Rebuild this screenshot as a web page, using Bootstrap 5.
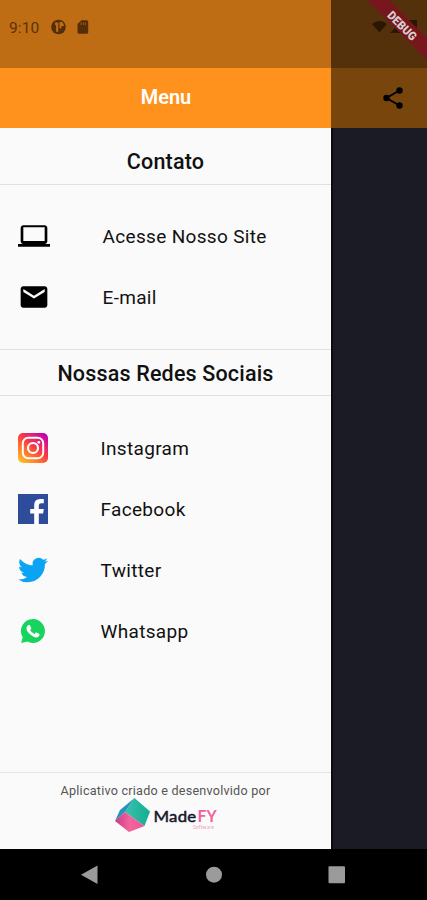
<!DOCTYPE html>
<html lang="pt-BR">
<head>
<meta charset="utf-8">
<meta name="viewport" content="width=device-width, initial-scale=1">
<title>Menu</title>
<link href="https://cdn.jsdelivr.net/npm/bootstrap@5.3.0/dist/css/bootstrap.min.css" rel="stylesheet">
<style>
body{font-family:Roboto,"Liberation Sans",sans-serif;background:#000;color:#111}
svg{display:block;flex-shrink:0}
.phone{width:427px;height:900px}
.drawer{width:331px;background:#fafafa}
.drawer-status{height:68px;background:#bf6d14;padding:0 0 12px 9px;color:#5a3208;font-size:15.5px;letter-spacing:.1px}
.drawer-status span{padding-top:2px}
.drawer-title{height:60px;background:#ff921c;font-size:20px;font-weight:600;padding:0 0 2px 1px}
.section-title{font-size:21.5px;font-weight:500;line-height:1;letter-spacing:.17px;border-bottom:1px solid #e0e0e0}
.title-contact{height:57px;padding-top:11px}
.title-social{height:47px;border-top:1px solid #e0e0e0;padding-top:2px}
.contact{height:164px;padding-top:20px}
.social{padding-top:21px}
.entry{height:61px;padding-left:18px;font-size:19px;letter-spacing:.33px;color:#111;line-height:1}
.entry span{padding-top:2px}
.entry-icon{width:84.5px}
.social .entry-icon{width:82.5px}
.credit{height:77px;border-top:1px solid #e4e4e4;font-size:12.6px;letter-spacing:.23px;line-height:15px;color:#555;padding-top:10px}
.brand{height:36px}
.side{width:96px;background:#1a1b24;border-left:2px solid #0c0c14}
.side-status,.side-bar{margin-left:-2px}
.side-status{height:68px;background:#55310b}
.side-bar{height:60px;background:#78450c;padding-right:22px}
.ribbon{right:0;top:0}
.navkeys{height:51px;background:#000}
</style>
</head>
<body>
<div class="phone d-flex flex-column overflow-hidden">
  <div class="d-flex flex-grow-1">
    <aside class="drawer d-flex flex-column">
      <div class="drawer-status d-flex align-items-center">
        <span>9:10</span>
        <svg class="ms-2" width="47" height="20" viewBox="0 0 47 20">
          <circle cx="11.500" cy="9" r="7.300" fill="#542e06"/>
          <path d="M8 4.500h3.300v9.200H9.100V7H8zM12.500 4h2.500q2 1.500 2 4h-2.500v2.200h-2z" fill="#bf6d14"/>
          <path d="M34.500 2.200h5.200q1.500 0 1.500 1.500v10.600q0 1.500-1.500 1.500H32q-1.500 0-1.500-1.500V6z" fill="#542e06"/>
          <path d="M34 4.500V7M36.200 4.500V7M38.400 4.500V7" stroke="#a05b11" stroke-width="1"/>
        </svg>
      </div>
      <div class="drawer-title d-flex align-items-center justify-content-center text-white">Menu</div>
      <div class="section-title title-contact d-flex align-items-center justify-content-center">Contato</div>
      <nav class="contact">
        <div class="entry d-flex align-items-center">
          <div class="entry-icon"><svg width="32" height="32" viewBox="0 0 24 24"><path d="M20 18c1.100 0 2-.9 2-2V6c0-1.100-.9-2-2-2H4c-1.100 0-2 .9-2 2v10c0 1.100.9 2 2 2H0v2h24v-2h-4zM4 5.500h16V15.800H4z"/></svg></div>
          <span>Acesse Nosso Site</span>
        </div>
        <div class="entry d-flex align-items-center">
          <div class="entry-icon"><svg width="32" height="32" viewBox="0 0 24 24"><path d="M20 4H4c-1.100 0-2 .9-2 2v12c0 1.100.9 2 2 2h16c1.100 0 2-.9 2-2V6c0-1.100-.9-2-2-2zm0 4.200-8 5-8-5V6l8 5 8-5v2z"/></svg></div>
          <span>E-mail</span>
        </div>
      </nav>
      <div class="section-title title-social d-flex align-items-center justify-content-center">Nossas Redes Sociais</div>
      <nav class="social flex-grow-1">
        <div class="entry d-flex align-items-center">
          <div class="entry-icon"><svg width="30" height="30" viewBox="0 0 30 30">
            <defs>
              <linearGradient id="ig" x1="0.1" y1="1" x2="0.9" y2="0"><stop offset="0" stop-color="#ffc42e"/><stop offset=".3" stop-color="#ff7a2c"/><stop offset=".55" stop-color="#f93a45"/><stop offset=".8" stop-color="#dc1a84"/><stop offset="1" stop-color="#b900b4"/></linearGradient>
            </defs>
            <rect width="30" height="30" rx="5" fill="url(#ig)"/>
            <rect x="4.800" y="4.800" width="20.400" height="20.400" rx="5.500" fill="none" stroke="#fff" stroke-width="2"/>
            <circle cx="15" cy="15" r="5" fill="none" stroke="#fff" stroke-width="2.200"/>
            <circle cx="20.800" cy="9.300" r="1.400" fill="#fff"/>
          </svg></div>
          <span>Instagram</span>
        </div>
        <div class="entry d-flex align-items-center">
          <div class="entry-icon"><svg width="30" height="30" viewBox="0 0 30 30"><rect width="30" height="30" fill="#2f4c9b"/><path d="M16.200 30V19.500h-4V15h4v-4q0-6 6-6h3.600v4.300h-2.600q-2.400 0-2.400 2.200V15h5l-.7 4.500h-4.300V30z" fill="#fff"/></svg></div>
          <span>Facebook</span>
        </div>
        <div class="entry d-flex align-items-center">
          <div class="entry-icon"><svg width="30" height="30" viewBox="0 0 24 24"><path fill="#0ba4f4" d="M23.953 4.570a10 10 0 01-2.825.775 4.958 4.958 0 002.163-2.723c-.951.555-2.005.959-3.127 1.184a4.920 4.920 0 00-8.384 4.482C7.690 8.095 4.067 6.130 1.640 3.162a4.822 4.822 0 00-.666 2.475c0 1.710.870 3.213 2.188 4.096a4.904 4.904 0 01-2.228-.616v.060a4.923 4.923 0 003.946 4.827 4.996 4.996 0 01-2.212.085 4.936 4.936 0 004.604 3.417 9.867 9.867 0 01-6.102 2.105c-.390 0-.779-.023-1.170-.067a13.995 13.995 0 007.557 2.209c9.053 0 13.998-7.496 13.998-13.985 0-.210 0-.420-.015-.630A9.935 9.935 0 0024 4.590z"/></svg></div>
          <span>Twitter</span>
        </div>
        <div class="entry d-flex align-items-center">
          <div class="entry-icon"><svg width="30" height="30" viewBox="0 0 30 30"><path d="M15 3A12 12 0 1 1 9.300 25.600L3.200 27l1.500-5.800A12 12 0 0 1 15 3z" fill="#18d35d"/><path d="M10.300 9h1.600l1.500 3.500-1.200 1.700q1.400 2.500 4.300 3.800l1.600-1.800 3.400 1.700q.1 3-3.200 3.500-2.400.2-6-2.800-3.700-3.300-3.900-6.100Q8.500 10 10.300 9z" fill="#fff"/></svg></div>
          <span>Whatsapp</span>
        </div>
      </nav>
      <footer class="credit d-flex flex-column align-items-center">
        <span>Aplicativo criado e desenvolvido por</span>
        <svg class="brand" width="106" height="36" viewBox="-2 0 106 36">
          <defs>
            <linearGradient id="teal"><stop offset="0" stop-color="#39c2ab"/><stop offset="1" stop-color="#12ad91"/></linearGradient>
            <linearGradient id="pink"><stop offset="0" stop-color="#c93b80"/><stop offset=".5" stop-color="#f2659f"/><stop offset="1" stop-color="#f0558f"/></linearGradient>
          </defs>
          <path d="M19.500 0 35 13.500 29.500 28 10 14z" fill="url(#teal)"/>
          <path d="M19.500 0 10 14 0 23 5 12z" fill="#2894bd"/>
          <path d="M10 14 29.500 28 14 34 0 23z" fill="url(#pink)"/>
          <text x="38.500" y="24" font-family="Lato,sans-serif" font-size="16" fill="#17172a" stroke="#17172a" stroke-width=".5" textLength="43" lengthAdjust="spacingAndGlyphs">Made</text>
          <text x="82.500" y="24" font-family="Lato,sans-serif" font-size="17.500" font-weight="700" fill="#f2609d" textLength="19.500" lengthAdjust="spacingAndGlyphs">FY</text>
          <text x="78" y="31" font-family="Lato,sans-serif" font-size="5" fill="#f59abf" textLength="21">Software</text>
        </svg>
      </footer>
    </aside>
    <div class="side">
      <div class="side-status position-relative">
        <svg class="ribbon position-absolute" width="96" height="68" viewBox="0 0 96 68">
          <path d="M41 24q7.500-6 15 0l-7.500 8.500zM59 33l12-12v12zM75 33V23l3-3h8v13z" fill="#291703"/>
          <path d="M36 0h22l38 38v22z" fill="#77171d"/>
          <text x="71" y="30" transform="rotate(45 71 26)" text-anchor="middle" font-family="Roboto,sans-serif" font-size="12" font-weight="900" fill="#d9cfd0" textLength="36" lengthAdjust="spacingAndGlyphs">DEBUG</text>
        </svg>
      </div>
      <div class="side-bar d-flex align-items-center justify-content-end">
        <svg width="24" height="24" viewBox="0 0 24 24"><path d="M18.500 4.500 5.500 12l13 7.500" fill="none" stroke="#000" stroke-width="2"/><g><circle cx="18.500" cy="4.500" r="3.200"/><circle cx="5.500" cy="12" r="3.200"/><circle cx="18.500" cy="19.500" r="3.200"/></g></svg>
      </div>
    </div>
  </div>
  <div class="navkeys">
    <svg width="427" height="51" viewBox="0 0 427 51" fill="#9b9b9b"><path d="M81 25.700 97.500 16.500v18.500z"/><circle cx="214" cy="25.700" r="8"/><rect x="328.500" y="17.200" width="16.500" height="17" rx="1"/></svg>
  </div>
</div>
<script src="https://cdn.jsdelivr.net/npm/bootstrap@5.3.0/dist/js/bootstrap.bundle.min.js"></script>
</body>
</html>
